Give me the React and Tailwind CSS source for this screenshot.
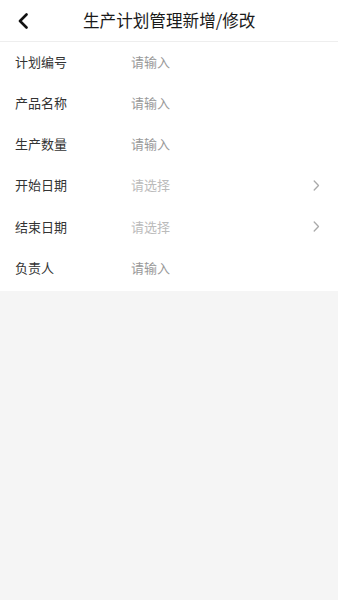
const rows = [
  { label: "计划编号", placeholder: "请输入" },
  { label: "产品名称", placeholder: "请输入" },
  { label: "生产数量", placeholder: "请输入" },
  { label: "开始日期", placeholder: "请选择", select: true },
  { label: "结束日期", placeholder: "请选择", select: true },
  { label: "负责人", placeholder: "请输入" },
];

export default function App() {
  return (
    <div
      className="min-h-[600px] bg-[#f5f5f5] text-[#222]"
      style={{ fontFamily: '"Noto Sans CJK SC", "Noto Sans", sans-serif' }}
    >
      <div className="flex h-[42px] items-center border-b border-[#eeeeee] bg-white">
        <div className="flex w-[46px] items-center pl-[17px]">
          <svg width="12" height="16" viewBox="0 0 12 16" fill="none">
            <path d="M9.5 1.5 L3 8 L9.5 14.5" stroke="#111" strokeWidth="2.6" strokeLinecap="round" strokeLinejoin="round" />
          </svg>
        </div>
        <div className="flex-1 pl-[37px] text-[16.6px] leading-none text-[#1a1a1a]">生产计划管理新增/修改</div>
      </div>
      <div className="bg-white pb-[2px]">
        {rows.map((row) => (
          <div key={row.label} className="flex h-[41.2px] items-center pl-[15px] pr-[18px] pb-[2px]">
            <div className="w-[116px] text-[13px] text-[#333]">{row.label}</div>
            <div className={`flex-1 text-[13px] ${row.select ? "text-[#bbbbbb]" : "text-[#999999]"}`}>
              {row.placeholder}
            </div>
            {row.select && (
              <svg width="7" height="11" viewBox="0 0 7 11" fill="none">
                <path d="M1.2 1 L5.5 5.5 L1.2 10" stroke="#aaaaaa" strokeWidth="1.3" strokeLinecap="round" strokeLinejoin="round" />
              </svg>
            )}
          </div>
        ))}
      </div>
    </div>
  );
}
